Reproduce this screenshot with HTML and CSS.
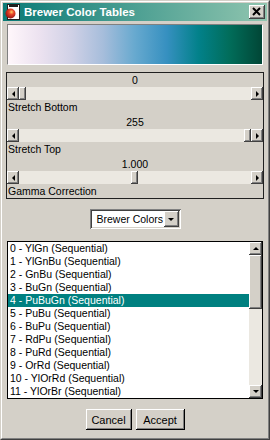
FILE: index.html
```html
<!DOCTYPE html>
<html lang="en">
  <head>
    <meta charset="UTF-8" />
    <meta name="viewport" content="width=device-width, initial-scale=1.0" />
    <title>Brewer Color Tables</title>
    <link rel="stylesheet" href="styles.css">
  </head>
  <body>
    <div class="window">
      <div class="frame">
        <!-- title bar -->
        <div class="titlebar">
          <svg class="app-icon" width="16" height="16" viewBox="0 0 16 16">
            <defs>
              <radialGradient id="ball" cx="0.6" cy="0.35" r="0.7">
                <stop offset="0" stop-color="#ffd060" />
                <stop offset="0.35" stop-color="#e8452a" />
                <stop offset="1" stop-color="#8a1010" />
              </radialGradient>
            </defs>
            <rect x="3.5" y="0.5" width="12" height="15" fill="#fff" stroke="#202020" />
            <rect x="5" y="1" width="9" height="2" fill="#202020" />
            <circle cx="6.5" cy="9.5" r="5" fill="url(#ball)" />
          </svg>
          <span class="title">Brewer Color Tables</span>
          <div class="close-btn">
            <svg width="16" height="14" viewBox="0 0 16 14">
              <path d="M4 3 L11 10 M11 3 L4 10" stroke="#000" stroke-width="2" fill="none" />
            </svg>
          </div>
        </div>

        <div class="content">
          <div class="ramp"></div>

          <div class="sliders">
            <div class="slider">
              <div class="value">0</div>
              <div class="hscroll">
                <span class="arrow-btn"><i class="tri-left"></i></span>
                <div class="track"><span class="thumb" style="margin-left: 0px"></span></div>
                <span class="arrow-btn"><i class="tri-right"></i></span>
              </div>
              <div class="caption">Stretch Bottom</div>
            </div>
            <div class="slider">
              <div class="value">255</div>
              <div class="hscroll">
                <span class="arrow-btn"><i class="tri-left"></i></span>
                <div class="track"><span class="thumb" style="margin-left: 225px"></span></div>
                <span class="arrow-btn"><i class="tri-right"></i></span>
              </div>
              <div class="caption">Stretch Top</div>
            </div>
            <div class="slider">
              <div class="value">1.000</div>
              <div class="hscroll">
                <span class="arrow-btn"><i class="tri-left"></i></span>
                <div class="track"><span class="thumb" style="margin-left: 112px"></span></div>
                <span class="arrow-btn"><i class="tri-right"></i></span>
              </div>
              <div class="caption">Gamma Correction</div>
            </div>
          </div>

          <div class="combo-row">
            <div class="combo">
              <span class="combo-text">Brewer Colors</span>
              <span class="combo-btn"><i class="tri-down"></i></span>
            </div>
          </div>

          <div class="listbox">
            <ul class="items">
              <li>0 - YlGn (Sequential)</li>
              <li>1 - YlGnBu (Sequential)</li>
              <li>2 - GnBu (Sequential)</li>
              <li>3 - BuGn (Sequential)</li>
              <li class="selected">4 - PuBuGn (Sequential)</li>
              <li>5 - PuBu (Sequential)</li>
              <li>6 - BuPu (Sequential)</li>
              <li>7 - RdPu (Sequential)</li>
              <li>8 - PuRd (Sequential)</li>
              <li>9 - OrRd (Sequential)</li>
              <li>10 - YlOrRd (Sequential)</li>
              <li>11 - YlOrBr (Sequential)</li>
            </ul>
            <div class="vscroll">
              <span class="varrow"><i class="tri-up"></i></span>
              <div class="vtrack"><span class="vthumb"></span></div>
              <span class="varrow"><i class="tri-down"></i></span>
            </div>
          </div>

          <div class="buttons">
            <button class="push cancel">Cancel</button>
            <button class="push accept">Accept</button>
          </div>
        </div>
      </div>
    </div>
  </body>
</html>
```
FILE: styles.css
```css
body {
  margin: 0;
  font-family: "Liberation Sans", Arial, sans-serif;
  font-size: 10.5px;
  color: #000;
}

/* outer window frame */
.window {
  box-sizing: border-box;
  width: 270px;
  height: 440px;
  background: #d4d0c8;
  border: 1px solid;
  border-color: #d4d0c8 #404040 #404040 #d4d0c8;
}

.frame {
  box-sizing: border-box;
  height: 100%;
  border: 1px solid;
  border-color: #fff #808080 #808080 #fff;
  padding: 1px;
}

.titlebar {
  height: 18px;
  display: flex;
  align-items: center;
  background: linear-gradient(to right, #0a7a76, #90c5af);
}

.app-icon {
  margin-left: 1px;
  flex: none;
}

.title {
  margin-left: 4px;
  color: #fff;
  font-weight: bold;
  font-size: 11.5px;
  flex: 1;
}

.close-btn {
  width: 16px;
  height: 14px;
  margin-right: 2px;
  background: #d4d0c8;
  box-shadow: inset -1px -1px #404040, inset 1px 1px #fff, inset -2px -2px #808080;
}

.close-btn svg {
  display: block;
}

.content {
  padding: 3px 4px 0;
}

.ramp {
  box-sizing: border-box;
  height: 41px;
  border: 1px solid;
  border-color: #808080 #fff #fff #808080;
  background: linear-gradient(to right, #fff7fb, #ece2f0, #d0d1e6, #a6bddb, #67a9cf, #3690c0, #02818a, #016c59, #014636);
}

/* slider group */
.sliders {
  margin: 7px -1px 0;
  border: 1px solid #202020;
  padding-top: 1px;
}

.slider {
  margin-bottom: 2px;
}

.slider:last-child {
  margin-bottom: 0;
}

.value {
  text-align: center;
  line-height: 13px;
}

.caption {
  line-height: 14px;
  padding-left: 1px;
}

.hscroll {
  display: flex;
  height: 13px;
  background: #ebe8e1;
}

.arrow-btn,
.varrow,
.combo-btn {
  display: flex;
  align-items: center;
  justify-content: center;
  background: #d4d0c8;
  box-shadow: inset -1px -1px #404040, inset 1px 1px #fff, inset -2px -2px #808080;
}

.arrow-btn {
  width: 12px;
  flex: none;
}

.track {
  flex: 1;
  display: flex;
}

.thumb {
  width: 7px;
  background: #d4d0c8;
  box-shadow: inset -1px -1px #404040, inset 1px 1px #fff, inset -2px -2px #808080;
}

.tri-left,
.tri-right,
.tri-up,
.tri-down {
  width: 0;
  height: 0;
  border-style: solid;
  border-color: transparent;
}

.tri-left {
  border-width: 3px 3px 3px 0;
  border-right-color: #000;
}

.tri-right {
  border-width: 3px 0 3px 3px;
  border-left-color: #000;
}

.tri-up {
  border-width: 0 3px 3px 3px;
  border-bottom-color: #000;
}

.tri-down {
  border-width: 3px 3px 0 3px;
  border-top-color: #000;
}

/* combo box */
.combo-row {
  display: flex;
  justify-content: center;
  margin-top: 10px;
}

.combo {
  box-sizing: border-box;
  width: 91px;
  height: 20px;
  background: #fff;
  display: flex;
  align-items: center;
  padding: 2px;
  box-shadow: inset 1px 1px #808080, inset -1px -1px #fff, inset 2px 2px #404040, inset -2px -2px #d4d0c8;
}

.combo-text {
  flex: 1;
  padding-left: 5px;
  white-space: nowrap;
  overflow: hidden;
}

.combo-btn {
  width: 15px;
  height: 16px;
  flex: none;
}

/* list box */
.listbox {
  box-sizing: border-box;
  height: 158px;
  margin-top: 12px;
  border: 1px solid #000;
  background: #fff;
  display: flex;
}

.items {
  list-style: none;
  margin: 0;
  padding: 0;
  flex: 1;
}

.items li {
  height: 13px;
  line-height: 13px;
  padding-left: 2px;
  white-space: nowrap;
}

.items li.selected {
  background: #008080;
  color: #fff;
}

.vscroll {
  width: 13px;
  display: flex;
  flex-direction: column;
  background: #ebe8e1;
}

.varrow {
  height: 13px;
  flex: none;
}

.vtrack {
  flex: 1;
}

.vthumb {
  display: block;
  height: 54px;
  background: #d4d0c8;
  box-shadow: inset -1px -1px #404040, inset 1px 1px #fff, inset -2px -2px #808080;
}

/* dialog buttons */
.buttons {
  display: flex;
  justify-content: center;
  gap: 4px;
  margin-top: 10px;
}

.push {
  height: 21px;
  border: 0;
  padding: 0;
  font-family: inherit;
  font-size: 11px;
  color: #000;
  background: #d4d0c8;
  box-shadow: inset -1px -1px #000, inset 1px 1px #fff, inset -2px -2px #808080;
}

.cancel {
  width: 46px;
}

.accept {
  width: 49px;
}
```
